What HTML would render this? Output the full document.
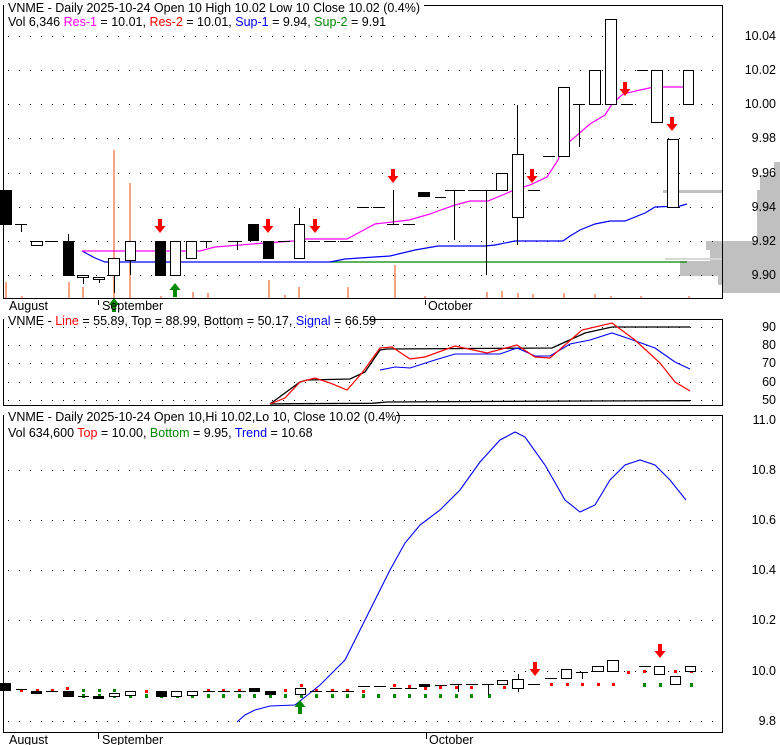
<!DOCTYPE html>
<html><head><meta charset="utf-8"><style>
body{margin:0;background:#fff;}
svg{display:block;font-family:"Liberation Sans",Arial,sans-serif;font-size:12.5px;}
</style></head><body>
<svg width="780" height="745" viewBox="0 0 780 745" xmlns="http://www.w3.org/2000/svg">
<defs>
<g id="dn"><rect x="-2" y="0" width="4" height="8" fill="#f00"/><path d="M-5.5 7H5.5L0 14Z" fill="#f00"/></g>
<g id="up"><rect x="-2" y="6" width="4" height="8" fill="#080"/><path d="M-5.5 7H5.5L0 0Z" fill="#080"/></g>
</defs>
<rect width="780" height="745" fill="#fff"/>

<g fill="#c0c0c0">
<rect x="663" y="190" width="60" height="3"/>
<path d="M774 162H780V293H723V285H718V275H710V250H706V241H757V190H760V175H774Z"/>
<rect x="665" y="258" width="58" height="2" fill="#d8d8d8"/>
<rect x="680" y="261" width="43" height="15"/>
</g>
<g stroke="#000" stroke-dasharray="1 10" stroke-width="1">
<line x1="8" y1="36.5" x2="722" y2="36.5"/><line x1="8" y1="70.5" x2="722" y2="70.5"/>
<line x1="8" y1="104.5" x2="722" y2="104.5"/><line x1="8" y1="138.5" x2="722" y2="138.5"/>
<line x1="8" y1="173.5" x2="722" y2="173.5"/><line x1="8" y1="207.5" x2="722" y2="207.5"/>
<line x1="8" y1="241.5" x2="722" y2="241.5"/><line x1="8" y1="275.5" x2="722" y2="275.5"/>
</g>
<g fill="#f8a383">
<rect x="5" y="282" width="2" height="16"/><rect x="21" y="296" width="2" height="2"/>
<rect x="68" y="282" width="2" height="16"/><rect x="82" y="287" width="2" height="11"/>
<rect x="113" y="150" width="2" height="148"/><rect x="129" y="183" width="2" height="115"/>
<rect x="160" y="296" width="2" height="2"/><rect x="192" y="292" width="2" height="6"/>
<rect x="207" y="293" width="2" height="5"/><rect x="268" y="280" width="2" height="18"/>
<rect x="284" y="295" width="2" height="3"/><rect x="298" y="287" width="2" height="11"/>
<rect x="347" y="287" width="2" height="11"/><rect x="394" y="265" width="2" height="33"/>
<rect x="424" y="296" width="2" height="2"/>
<rect x="486" y="292" width="2" height="6"/><rect x="501" y="291" width="2" height="7"/>
<rect x="517" y="293" width="2" height="5"/><rect x="532" y="294" width="2" height="4"/>
<rect x="563" y="293" width="2" height="5"/><rect x="594" y="294" width="2" height="4"/>
<rect x="610" y="296" width="2" height="2"/><rect x="640" y="296" width="2" height="2"/>
<rect x="688" y="296" width="2" height="2"/>
</g>
<polyline fill="none" stroke="#080" stroke-width="1.2" points="330,262 687,262"/>
<polyline fill="none" stroke="#00f" stroke-width="1.2" points="82,251 95,258 105,262 330,262 345,259 390,256 415,250 438,246 485,246 495,245 515,241 563,241 570,236 580,230 595,224 610,221 625,221 645,213 655,207 680,206 687,204"/>
<polyline fill="none" stroke="#f0f" stroke-width="1.2" points="82,251 200,251 215,247 265,243 293,241 305,239 347,239 360,232 375,224 409,220 430,214 438,211 455,205 470,201 488,201 505,194 514,190 530,185 547,177 558,160 563,147 575,137 590,124 605,115 612,104 623,94 640,90 654,87 683,87"/>
<g stroke="#000" stroke-width="1">
<rect x="0.5" y="190.5" width="11" height="34" fill="#000"/>
<line x1="15" y1="224.5" x2="27" y2="224.5"/><line x1="21.5" y1="224" x2="21.5" y2="232"/>
<rect x="31.5" y="241.5" width="11" height="4" fill="#fff"/>
<line x1="45" y1="241.5" x2="58" y2="241.5"/>
<line x1="68.5" y1="234" x2="68.5" y2="276"/><rect x="63.5" y="241.5" width="10" height="34" fill="#000"/>
<line x1="83.5" y1="275" x2="83.5" y2="284"/><rect x="77.5" y="275.5" width="11" height="2" fill="#fff"/>
<line x1="99.5" y1="277" x2="99.5" y2="283"/><rect x="93.5" y="277.5" width="11" height="2" fill="#fff"/>
<line x1="114.5" y1="258" x2="114.5" y2="293"/><rect x="108.5" y="258.5" width="11" height="17" fill="#fff"/>
<line x1="130.5" y1="241" x2="130.5" y2="275"/><rect x="125.5" y="241.5" width="10" height="19" fill="#fff"/>
<rect x="155.5" y="241.5" width="10" height="34" fill="#000"/>
<rect x="170.5" y="241.5" width="10" height="34" fill="#fff"/>
<rect x="186.5" y="241.5" width="10" height="17" fill="#fff"/>
<line x1="200" y1="241.5" x2="212" y2="241.5"/><line x1="206.5" y1="241" x2="206.5" y2="248"/>
<line x1="228" y1="241.5" x2="242" y2="241.5"/><line x1="237.5" y1="241" x2="237.5" y2="250"/>
<rect x="248.5" y="224.5" width="10" height="16" fill="#000"/>
<rect x="263.5" y="241.5" width="10" height="17" fill="#000"/>
<line x1="278" y1="241.5" x2="290" y2="241.5"/>
<line x1="299.5" y1="208" x2="299.5" y2="224"/><rect x="294.5" y="224.5" width="10" height="34" fill="#fff"/>
<line x1="308" y1="241.5" x2="320" y2="241.5"/><line x1="324" y1="241.5" x2="336" y2="241.5"/><line x1="340" y1="241.5" x2="353" y2="241.5"/>
<line x1="357" y1="207.5" x2="369" y2="207.5"/><line x1="373" y1="207.5" x2="385" y2="207.5"/>
<line x1="387" y1="224.5" x2="399" y2="224.5"/><line x1="393.5" y1="190" x2="393.5" y2="224"/>
<line x1="403" y1="224.5" x2="415" y2="224.5"/>
<rect x="418.5" y="192.5" width="11" height="4" fill="#000"/>
<line x1="435" y1="197.5" x2="446" y2="197.5"/>
<line x1="445" y1="190.5" x2="465" y2="190.5"/><line x1="454.5" y1="190" x2="454.5" y2="240"/>
<line x1="468" y1="190.5" x2="485" y2="190.5"/>
<line x1="480" y1="190.5" x2="496" y2="190.5"/><line x1="486.5" y1="190" x2="486.5" y2="275"/>
<rect x="496.5" y="173.5" width="11" height="17" fill="#fff"/>
<line x1="517.5" y1="105" x2="517.5" y2="245"/><rect x="512.5" y="154.5" width="11" height="63" fill="#fff"/>
<line x1="528" y1="190.5" x2="540" y2="190.5"/>
<line x1="543" y1="156.5" x2="555" y2="156.5"/>
<rect x="558.5" y="87.5" width="11" height="69" fill="#fff"/>
<line x1="573" y1="104.5" x2="585" y2="104.5"/><line x1="579.5" y1="104" x2="579.5" y2="147"/>
<rect x="589.5" y="70.5" width="11" height="34" fill="#fff"/>
<rect x="605.5" y="19.5" width="11" height="85" fill="#fff"/>
<line x1="621" y1="104.5" x2="633" y2="104.5"/>
<line x1="637" y1="70.5" x2="648" y2="70.5"/>
<rect x="651.5" y="70.5" width="11" height="52" fill="#fff"/>
<rect x="667.5" y="139.5" width="11" height="68" fill="#fff"/>
<rect x="683.5" y="70.5" width="10" height="34" fill="#fff"/>
</g>
<use href="#dn" x="160" y="219"/><use href="#dn" x="268" y="219"/><use href="#dn" x="315" y="219"/>
<use href="#dn" x="393" y="169"/><use href="#dn" x="532" y="169"/><use href="#dn" x="625" y="82"/><use href="#dn" x="672" y="117"/>
<use href="#up" x="175" y="283"/><use href="#up" x="114" y="298"/>
<path d="M3.5 298.5V5.5H722.5V298.5Z" fill="none" stroke="#000"/>
<rect x="4" y="0" width="420" height="27" fill="#fff"/>
<text x="8" y="12">VNME - Daily 2025-10-24 Open 10  High 10.02  Low 10  Close 10.02 (0.4%)</text>
<text x="8" y="26">Vol 6,346 <tspan fill="#f0f">Res-1</tspan> = 10.01, <tspan fill="#f00">Res-2</tspan> = 10.01, <tspan fill="#00f">Sup-1</tspan> = 9.94, <tspan fill="#080">Sup-2</tspan> = 9.91</text>
<g text-anchor="end">
<text x="776" y="40">10.04</text><text x="776" y="74">10.02</text><text x="776" y="108">10.00</text>
<text x="776" y="142">9.98</text><text x="776" y="177">9.96</text><text x="776" y="211">9.94</text>
<text x="776" y="245">9.92</text><text x="776" y="279">9.90</text>
</g>
<line x1="98.5" y1="300" x2="98.5" y2="305" stroke="#000"/><line x1="425.5" y1="300" x2="425.5" y2="305" stroke="#000"/>
<text x="9" y="310">August</text><text x="102" y="310">September</text><text x="428" y="310">October</text>

<g stroke="#000" stroke-dasharray="1 10">
<line x1="8" y1="327.5" x2="722" y2="327.5"/><line x1="8" y1="345.5" x2="722" y2="345.5"/>
<line x1="8" y1="363.5" x2="722" y2="363.5"/><line x1="8" y1="382.5" x2="722" y2="382.5"/>
<line x1="8" y1="400.5" x2="722" y2="400.5"/>
</g>
<polyline fill="none" stroke="#000" stroke-width="1.3" points="270,404 292,403.7 372,403.3 387,402 590,401 690,400.7"/>
<polyline fill="none" stroke="#000" stroke-width="1.3" points="270,404 300,382 307,380 350,379 365,372 380,350 387,349 552,348 585,333 612,327 690,327"/>
<polyline fill="none" stroke="#00f" stroke-width="1.1" points="380,370 395,367 410,368 435,360 455,354 475,354 500,354 517,348 535,356 550,356 570,344 590,340 612,333 630,339 655,348 675,362 690,369"/>
<polyline fill="none" stroke="#f00" stroke-width="1.2" points="270,404 285,398 300,382 315,378 330,383 347,390 362,373 380,348 392,347 410,359 425,357 455,346 487,353 517,345 535,357 550,358 582,330 612,323 635,340 660,363 675,382 690,391"/>
<path d="M3.5 405.5V319.5H722.5V405.5Z" fill="none" stroke="#000"/>
<rect x="4" y="313" width="365" height="14" fill="#fff"/>
<text x="8" y="325">VNME - <tspan fill="#f00">Line</tspan> = 55.89, Top = 88.99, Bottom = 50.17, <tspan fill="#00f">Signal</tspan> = 66.59</text>
<g text-anchor="end">
<text x="776" y="331">90</text><text x="776" y="349">80</text><text x="776" y="367">70</text><text x="776" y="386">60</text><text x="776" y="404">50</text>
</g>

<g stroke="#000" stroke-dasharray="1 10">
<line x1="8" y1="420.5" x2="722" y2="420.5"/><line x1="8" y1="470.5" x2="722" y2="470.5"/>
<line x1="8" y1="520.5" x2="722" y2="520.5"/><line x1="8" y1="570.5" x2="722" y2="570.5"/>
<line x1="8" y1="620.5" x2="722" y2="620.5"/><line x1="8" y1="671.5" x2="722" y2="671.5"/>
<line x1="8" y1="721.5" x2="722" y2="721.5"/>
</g>
<polyline fill="none" stroke="#00f" stroke-width="1.1" points="237,722 245,715 255,710 270,706 295,705 305,697 320,685 335,670 345,660 360,630 375,600 390,570 405,543 420,525 440,510 460,490 480,462 500,440 515,432 525,437 545,465 565,500 580,512 595,505 610,480 625,465 640,460 655,465 670,480 686,500"/>
<g fill="#080">
<rect x="82" y="694" width="3" height="4"/><rect x="98" y="694" width="3" height="4"/><rect x="113" y="694" width="3" height="4"/>
<rect x="129" y="694" width="3" height="4"/><rect x="145" y="694" width="3" height="4"/><rect x="160" y="694" width="3" height="4"/>
<rect x="176" y="694" width="3" height="4"/><rect x="191" y="694" width="3" height="4"/><rect x="207" y="694" width="3" height="4"/>
<rect x="222" y="694" width="3" height="4"/><rect x="238" y="694" width="3" height="4"/><rect x="253" y="694" width="3" height="4"/>
<rect x="269" y="694" width="3" height="4"/><rect x="284" y="694" width="3" height="4"/><rect x="300" y="694" width="3" height="4"/>
<rect x="315" y="694" width="3" height="4"/><rect x="331" y="694" width="3" height="4"/><rect x="346" y="694" width="3" height="4"/>
<rect x="362" y="694" width="3" height="4"/><rect x="377" y="694" width="3" height="4"/><rect x="393" y="694" width="3" height="4"/>
<rect x="408" y="694" width="3" height="4"/><rect x="424" y="694" width="3" height="4"/><rect x="439" y="694" width="3" height="4"/>
<rect x="455" y="694" width="3" height="4"/><rect x="470" y="694" width="3" height="4"/><rect x="488" y="694" width="3" height="4"/>
<rect x="82" y="689" width="3" height="3"/><rect x="98" y="689" width="3" height="3"/><rect x="113" y="689" width="3" height="3"/>
<rect x="643" y="683" width="3" height="4"/><rect x="659" y="683" width="3" height="4"/><rect x="690" y="683" width="3" height="4"/>
</g>
<g fill="#f00">
<rect x="20" y="689" width="3" height="3"/><rect x="36" y="689" width="3" height="3"/><rect x="51" y="689" width="3" height="3"/>
<rect x="66" y="687" width="3" height="3"/><rect x="145" y="690" width="3" height="3"/><rect x="207" y="689" width="3" height="3"/>
<rect x="222" y="689" width="3" height="3"/><rect x="238" y="689" width="3" height="3"/><rect x="284" y="689" width="3" height="3"/>
<rect x="300" y="684" width="3" height="3"/><rect x="315" y="689" width="3" height="3"/><rect x="331" y="689" width="3" height="3"/>
<rect x="346" y="689" width="3" height="3"/><rect x="362" y="690" width="3" height="3"/><rect x="393" y="684" width="3" height="3"/>
<rect x="408" y="685" width="3" height="3"/><rect x="424" y="687" width="3" height="3"/><rect x="439" y="686" width="3" height="3"/>
<rect x="455" y="686" width="3" height="3"/><rect x="470" y="686" width="3" height="3"/><rect x="503" y="686" width="3" height="3"/>
<rect x="550" y="683" width="3" height="3"/><rect x="566" y="683" width="3" height="3"/><rect x="581" y="683" width="3" height="3"/>
<rect x="597" y="683" width="3" height="3"/><rect x="612" y="683" width="3" height="3"/><rect x="627" y="671" width="3" height="3"/>
<rect x="643" y="670" width="3" height="3"/><rect x="674" y="670" width="3" height="3"/><rect x="690" y="670" width="3" height="3"/>
</g>
<g stroke="#000">
<rect x="0.5" y="683.5" width="10" height="7" fill="#000"/>
<line x1="16" y1="689.5" x2="27" y2="689.5"/>
<rect x="31.5" y="691.5" width="10" height="2" fill="#000"/>
<line x1="46" y1="691.5" x2="58" y2="691.5"/>
<rect x="63.5" y="691.5" width="10" height="5" fill="#000"/>
<line x1="78" y1="696.5" x2="89" y2="696.5"/>
<rect x="93.5" y="696.5" width="10" height="2" fill="#000"/>
<rect x="109.5" y="693.5" width="10" height="3" fill="#fff"/>
<rect x="125.5" y="691.5" width="10" height="4" fill="#fff"/>
<rect x="156.5" y="691.5" width="10" height="5" fill="#000"/>
<rect x="171.5" y="691.5" width="10" height="5" fill="#fff"/>
<rect x="187.5" y="691.5" width="10" height="4" fill="#fff"/>
<line x1="203" y1="691.5" x2="215" y2="691.5"/><line x1="218" y1="691.5" x2="230" y2="691.5"/><line x1="234" y1="691.5" x2="246" y2="691.5"/>
<rect x="249.5" y="688.5" width="10" height="3" fill="#000"/>
<rect x="265.5" y="691.5" width="10" height="3" fill="#000"/>
<rect x="295.5" y="688.5" width="10" height="6" fill="#fff"/>
<line x1="310" y1="691.5" x2="322" y2="691.5"/><line x1="326" y1="691.5" x2="338" y2="691.5"/><line x1="342" y1="691.5" x2="354" y2="691.5"/>
<line x1="358" y1="686.5" x2="370" y2="686.5"/><line x1="374" y1="686.5" x2="386" y2="686.5"/>
<line x1="390" y1="688.5" x2="402" y2="688.5"/><line x1="405" y1="688.5" x2="417" y2="688.5"/>
<rect x="419.5" y="684.5" width="10" height="2" fill="#000"/>
<line x1="435" y1="685.5" x2="447" y2="685.5"/><line x1="450" y1="684.5" x2="462" y2="684.5"/><line x1="466" y1="684.5" x2="478" y2="684.5"/>
<line x1="482" y1="684.5" x2="494" y2="684.5"/><line x1="488.5" y1="684" x2="488.5" y2="695"/>
<line x1="458.5" y1="684" x2="458.5" y2="692"/>
<rect x="497.5" y="680.5" width="10" height="4" fill="#fff"/>
<line x1="518.5" y1="674" x2="518.5" y2="692"/><rect x="512.5" y="679.5" width="11" height="9" fill="#fff"/>
<line x1="528" y1="684.5" x2="540" y2="684.5"/>
<line x1="545" y1="678.5" x2="557" y2="678.5"/>
<rect x="561.5" y="669.5" width="10" height="9" fill="#fff"/>
<line x1="576" y1="672.5" x2="588" y2="672.5"/><line x1="582.5" y1="672" x2="582.5" y2="679"/>
<rect x="592.5" y="666.5" width="11" height="5" fill="#fff"/>
<rect x="607.5" y="660.5" width="11" height="11" fill="#fff"/>
<line x1="639" y1="666.5" x2="651" y2="666.5"/>
<rect x="654.5" y="666.5" width="10" height="8" fill="#fff"/>
<rect x="670.5" y="676.5" width="10" height="8" fill="#fff"/>
<rect x="685.5" y="666.5" width="10" height="5" fill="#fff"/>
</g>
<use href="#up" x="300" y="700"/>
<use href="#dn" x="535" y="662"/><use href="#dn" x="660" y="644"/>
<path d="M3.5 732.5V415.5H722.5V732.5Z" fill="none" stroke="#000"/>
<rect x="4" y="409" width="392" height="30" fill="#fff"/>
<text x="8" y="421">VNME - Daily 2025-10-24 Open 10,Hi 10.02,Lo 10, Close 10.02 (0.4%)</text>
<text x="8" y="437">Vol 634,600 <tspan fill="#f00">Top</tspan> = 10.00, <tspan fill="#080">Bottom</tspan> = 9.95, <tspan fill="#00f">Trend</tspan> = 10.68</text>
<g text-anchor="end">
<text x="776" y="424">11.0</text><text x="776" y="474">10.8</text><text x="776" y="524">10.6</text>
<text x="776" y="574">10.4</text><text x="776" y="624">10.2</text><text x="776" y="675">10.0</text><text x="776" y="725">9.8</text>
</g>
<line x1="98.5" y1="733" x2="98.5" y2="739" stroke="#000"/><line x1="426.5" y1="733" x2="426.5" y2="739" stroke="#000"/>
<text x="9" y="744">August</text><text x="102" y="744">September</text><text x="429" y="744">October</text>
</svg>
</body></html>
